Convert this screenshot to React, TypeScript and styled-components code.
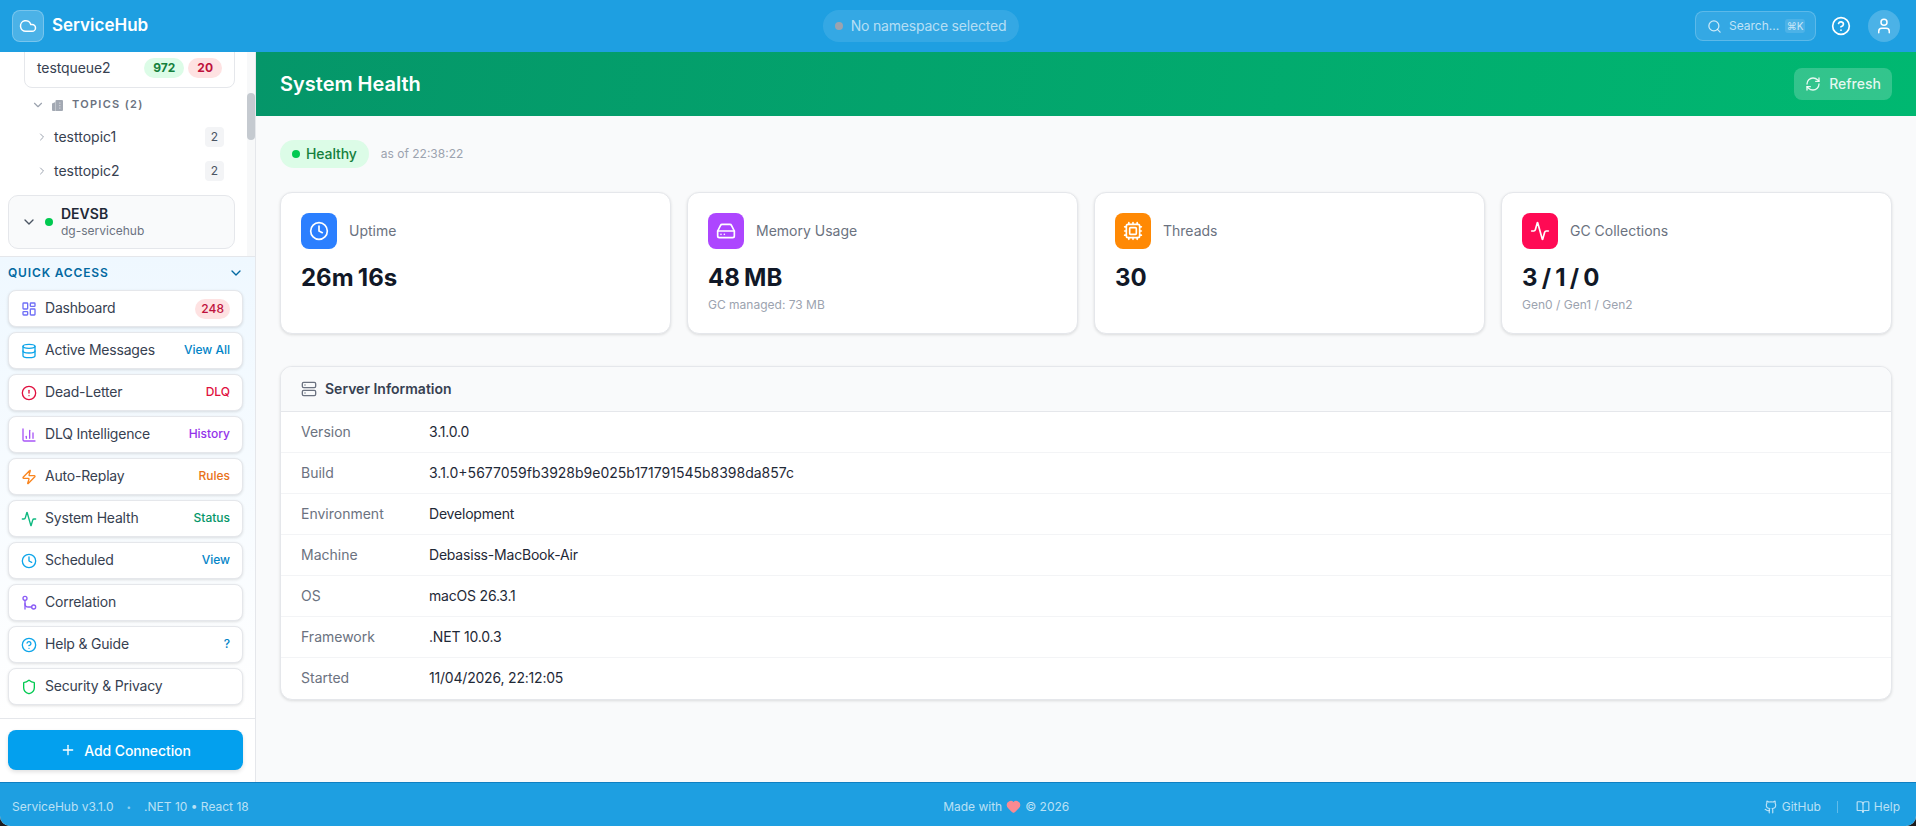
import styled, { createGlobalStyle, css } from 'styled-components';
import {
  Activity,
  BookOpen,
  ChartColumn,
  ChevronDown,
  ChevronRight,
  CircleAlert,
  CircleHelp,
  Clock,
  Cloud,
  Cpu,
  Database,
  Github,
  HardDrive,
  Heart,
  LayoutDashboard,
  Plus,
  RefreshCw,
  Search,
  Server,
  Shield,
  User,
  Zap,
} from 'lucide-react';

const GlobalStyle = createGlobalStyle`
  html, body {
    margin: 0;
    height: 100%;
    overflow: hidden;
    background: #1c1c1e;
  }
  * {
    box-sizing: border-box;
  }
  #root {
    height: 100%;
  }
`;

const raised = css`
  padding-bottom: 2px;
`;

const TopicsIcon = () => (
  <svg width="13" height="13" viewBox="0 0 13 13">
    <path
      d="M1 4.5 4.5 3V2a1 1 0 0 1 1-1H11a1 1 0 0 1 1 1v9a1 1 0 0 1-1 1H2a1 1 0 0 1-1-1z"
      fill="#a3a9b3"
    />
    <path d="M4.5 3v9" stroke="#d5d8dc" strokeWidth="0.6" />
    <path d="M8.2 3.5h1.2v1.2H8.2zM8.2 6h1.2v1.2H8.2zM8.2 8.5h1.2v1.2H8.2z" fill="#d5d8dc" />
  </svg>
);

const CorrelationIcon = () => (
  <svg width="16" height="16" viewBox="0 0 24 24" fill="none" stroke="#8b5cf6" strokeWidth="2" strokeLinecap="round">
    <circle cx="6" cy="5" r="3" />
    <circle cx="19" cy="18" r="3" />
    <path d="M6 8v5a5 5 0 0 0 5 5h5" />
    <path d="M6 13v8" />
  </svg>
);

const quickItems = [
  { label: 'Dashboard', icon: <LayoutDashboard size={16} color="#6f6ff6" />, badge: '248' },
  { label: 'Active Messages', icon: <Database size={16} color="#0ea5e9" />, tag: 'View All', tagColor: '#0284c7' },
  { label: 'Dead-Letter', icon: <CircleAlert size={16} color="#e0103f" />, tag: 'DLQ', tagColor: '#e0103f' },
  { label: 'DLQ Intelligence', icon: <ChartColumn size={16} color="#a855f7" />, tag: 'History', tagColor: '#9333ea' },
  { label: 'Auto-Replay', icon: <Zap size={16} color="#f9851f" />, tag: 'Rules', tagColor: '#e8711a' },
  { label: 'System Health', icon: <Activity size={16} color="#10b981" />, tag: 'Status', tagColor: '#059669' },
  { label: 'Scheduled', icon: <Clock size={16} color="#0ea5e9" />, tag: 'View', tagColor: '#0284c7' },
  { label: 'Correlation', icon: <CorrelationIcon /> },
  { label: 'Help & Guide', icon: <CircleHelp size={16} color="#0ea5e9" />, tag: '?', tagColor: '#0284c7' },
  { label: 'Security & Privacy', icon: <Shield size={16} color="#00c950" /> },
];

const stats = [
  { label: 'Uptime', value: '26m 16s', color: '#2b7fff', icon: <Clock size={20} color="#fff" /> },
  { label: 'Memory Usage', value: '48 MB', sub: 'GC managed: 73 MB', color: '#ad46ff', icon: <HardDrive size={20} color="#fff" /> },
  { label: 'Threads', value: '30', color: '#ff8904', icon: <Cpu size={20} color="#fff" /> },
  { label: 'GC Collections', value: '3 / 1 / 0', sub: 'Gen0 / Gen1 / Gen2', color: '#ff0a54', icon: <Activity size={20} color="#fff" /> },
];

const serverInfo = [
  ['Version', '3.1.0.0'],
  ['Build', '3.1.0+5677059fb3928b9e025b171791545b8398da857c'],
  ['Environment', 'Development'],
  ['Machine', 'Debasiss-MacBook-Air'],
  ['OS', 'macOS 26.3.1'],
  ['Framework', '.NET 10.0.3'],
  ['Started', '11/04/2026, 22:12:05'],
];

const App = () => {
  return (
    <Shell>
      <GlobalStyle />
      <Header>
        <Brand>
          <LogoTile>
            <Cloud size={18} color="#fff" />
          </LogoTile>
          <BrandName>ServiceHub</BrandName>
        </Brand>
        <NamespacePill>
          <GreyDot />
          <PillText>No namespace selected</PillText>
        </NamespacePill>
        <HeaderActions>
          <SearchBox>
            <Search size={15} color="rgba(255,255,255,0.75)" />
            <SearchText>Search...</SearchText>
            <Kbd>⌘K</Kbd>
          </SearchBox>
          <HelpButton>
            <CircleHelp size={20} color="#fff" />
          </HelpButton>
          <Avatar>
            <User size={18} color="#fff" />
          </Avatar>
        </HeaderActions>
      </Header>

      <Body>
        <Sidebar>
          <Tree>
            <QueueCard>
              <QueueName>testqueue2</QueueName>
              <CountBadge $bg="#dcfce7" $fg="#15803d">972</CountBadge>
              <CountBadge $bg="#fee2e2" $fg="#be123c">20</CountBadge>
            </QueueCard>
            <TopicsHeading>
              <ChevronDown size={14} color="#9ca3af" />
              <TopicsIcon />
              <TopicsLabel>TOPICS (2)</TopicsLabel>
            </TopicsHeading>
            <TopicRow>
              <ChevronRight size={12} color="#9ca3af" />
              <TopicName>testtopic1</TopicName>
              <SubCount>2</SubCount>
            </TopicRow>
            <TopicRow>
              <ChevronRight size={12} color="#9ca3af" />
              <TopicName>testtopic2</TopicName>
              <SubCount>2</SubCount>
            </TopicRow>
            <NamespaceCard>
              <ChevronDown size={16} color="#4b5563" />
              <GreenDot />
              <div>
                <NamespaceName>DEVSB</NamespaceName>
                <NamespaceHost>dg-servicehub</NamespaceHost>
              </div>
            </NamespaceCard>
            <ScrollTrack>
              <ScrollThumb />
            </ScrollTrack>
          </Tree>

          <QuickAccess>
            <QuickHeading>
              <span>QUICK ACCESS</span>
              <ChevronDown size={16} color="#0369a1" />
            </QuickHeading>
            <QuickList>
              {quickItems.map((item) => (
                <QuickItem key={item.label}>
                  <IconSlot>{item.icon}</IconSlot>
                  <QuickLabel>{item.label}</QuickLabel>
                  {item.badge && <AlertBadge>{item.badge}</AlertBadge>}
                  {item.tag && <QuickTag $color={item.tagColor}>{item.tag}</QuickTag>}
                </QuickItem>
              ))}
            </QuickList>
          </QuickAccess>

          <AddArea>
            <AddButton>
              <Plus size={16} color="#fff" />
              Add Connection
            </AddButton>
          </AddArea>
        </Sidebar>

        <Main>
          <Banner>
            <PageTitle>System Health</PageTitle>
            <RefreshButton>
              <RefreshCw size={16} />
              <ButtonText>Refresh</ButtonText>
            </RefreshButton>
          </Banner>
          <Content>
            <StatusRow>
              <HealthyPill>
                <HealthyDot />
                <HealthyText>Healthy</HealthyText>
              </HealthyPill>
              <AsOf>as of 22:38:22</AsOf>
            </StatusRow>
            <StatGrid>
              {stats.map((stat) => (
                <StatCard key={stat.label}>
                  <StatTop>
                    <StatIcon $color={stat.color}>{stat.icon}</StatIcon>
                    <StatLabel>{stat.label}</StatLabel>
                  </StatTop>
                  <StatValue>{stat.value}</StatValue>
                  {stat.sub && <StatSub>{stat.sub}</StatSub>}
                </StatCard>
              ))}
            </StatGrid>
            <InfoCard>
              <InfoHeader>
                <Server size={16} color="#6b7280" />
                <InfoTitle>Server Information</InfoTitle>
              </InfoHeader>
              {serverInfo.map(([label, value]) => (
                <InfoRow key={label}>
                  <InfoLabel>{label}</InfoLabel>
                  <InfoValue $tight={label !== 'Build'}>{value}</InfoValue>
                </InfoRow>
              ))}
            </InfoCard>
          </Content>
        </Main>
      </Body>

      <Footer>
        <FooterLeft>
          <span>ServiceHub v3.1.0</span>
          <FooterDot>•</FooterDot>
          <span>.NET 10 • React 18</span>
        </FooterLeft>
        <FooterCenter>
          Made with
          <Heart size={15} color="#fb8a92" fill="#fb8a92" />
          © 2026
        </FooterCenter>
        <FooterRight>
          <FooterLink>
            <Github size={14} />
            GitHub
          </FooterLink>
          <FooterSeparator />
          <FooterLink>
            <BookOpen size={14} />
            Help
          </FooterLink>
        </FooterRight>
      </Footer>
    </Shell>
  );
};

const Shell = styled.div`
  height: 826px;
  display: flex;
  flex-direction: column;
  overflow: hidden;
  border-radius: 0 0 10px 10px;
  font-family: Inter, 'Liberation Sans', sans-serif;
  background: #f9fafb;
`;

const Header = styled.header`
  height: 52px;
  flex: none;
  display: flex;
  align-items: center;
  justify-content: space-between;
  padding: 0 16px 0 12px;
  background: #1e9fe1;
`;

const Brand = styled.div`
  width: 134px;
  flex: none;
  display: flex;
  align-items: center;
  gap: 8px;
`;

const LogoTile = styled.div`
  width: 32px;
  height: 32px;
  flex: none;
  display: flex;
  align-items: center;
  justify-content: center;
  border-radius: 8px;
  background: rgba(255, 255, 255, 0.2);
  border: 1px solid rgba(255, 255, 255, 0.25);
`;

const BrandName = styled.span`
  ${raised}
  font-size: 17px;
  font-weight: 600;
  color: #fff;
`;

const NamespacePill = styled.div`
  width: 196px;
  height: 32px;
  display: flex;
  align-items: center;
  justify-content: center;
  gap: 8px;
  border-radius: 16px;
  background: rgba(255, 255, 255, 0.1);
`;

const PillText = styled.span`
  ${raised}
  font-size: 14px;
  letter-spacing: -0.2px;
  color: rgba(255, 255, 255, 0.65);
`;

const GreyDot = styled.span`
  width: 8px;
  height: 8px;
  border-radius: 50%;
  background: #9ca3af;
`;

const HeaderActions = styled.div`
  display: flex;
  align-items: center;
`;

const SearchBox = styled.div`
  width: 121px;
  height: 30px;
  display: flex;
  align-items: center;
  padding: 0 10px 0 11px;
  border-radius: 8px;
  border: 1px solid rgba(255, 255, 255, 0.2);
  background: rgba(255, 255, 255, 0.1);
`;

const SearchText = styled.span`
  ${raised}
  flex: 1;
  margin-left: 7px;
  font-size: 12px;
  color: rgba(255, 255, 255, 0.7);
`;

const Kbd = styled.span`
  width: 20px;
  height: 14px;
  display: flex;
  align-items: center;
  justify-content: center;
  border-radius: 3px;
  background: rgba(255, 255, 255, 0.12);
  font-size: 10px;
  color: rgba(255, 255, 255, 0.7);
`;

const HelpButton = styled.div`
  margin-left: 15px;
  display: flex;
`;

const Avatar = styled.div`
  width: 32px;
  height: 32px;
  margin-left: 17px;
  display: flex;
  align-items: center;
  justify-content: center;
  border-radius: 50%;
  background: rgba(255, 255, 255, 0.2);
`;

const Body = styled.div`
  flex: 1;
  min-height: 0;
  display: flex;
`;

const Sidebar = styled.aside`
  width: 256px;
  flex: none;
  display: flex;
  flex-direction: column;
  background: #fff;
  border-right: 1px solid #e5e7eb;
`;

const Tree = styled.div`
  position: relative;
  flex: 1;
  min-height: 0;
  overflow: hidden;
  display: flex;
  flex-direction: column;
  justify-content: flex-end;
  padding: 0 20px 7px 8px;
`;

const ScrollTrack = styled.div`
  position: absolute;
  top: 0;
  right: 0;
  bottom: 0;
  width: 8px;
  background: #f7f8f9;
`;

const ScrollThumb = styled.div`
  width: 8px;
  height: 47px;
  margin-top: 41px;
  border-radius: 4px;
  background: #c5cad0;
`;

const QueueCard = styled.div`
  flex: none;
  height: 40px;
  margin-left: 16px;
  display: flex;
  align-items: center;
  gap: 4px;
  padding: 0 12px;
  border: 1px solid #e5e7eb;
  border-radius: 0 0 8px 8px;
`;

const QueueName = styled.span`
  ${raised}
  flex: 1;
  font-size: 14px;
  letter-spacing: -0.1px;
  color: #374151;
`;

const CountBadge = styled.span<{ $bg: string; $fg: string }>`
  height: 20px;
  min-width: 32px;
  padding: 0 9px 1px;
  display: flex;
  align-items: center;
  justify-content: center;
  border-radius: 10px;
  background: ${(p) => p.$bg};
  color: ${(p) => p.$fg};
  font-size: 12px;
  font-weight: 700;
`;

const TopicsHeading = styled.div`
  flex: none;
  height: 30px;
  margin-top: 2px;
  padding-left: 23px;
  display: flex;
  align-items: center;
  gap: 6px;
`;

const TopicsLabel = styled.span`
  ${raised}
  margin-left: 2px;
  font-size: 11px;
  font-weight: 600;
  letter-spacing: 1.3px;
  color: #6b7280;
`;

const TopicRow = styled.div`
  flex: none;
  height: 34px;
  padding: 0 11px 0 28px;
  display: flex;
  align-items: center;
  gap: 6px;
`;

const TopicName = styled.span`
  ${raised}
  flex: 1;
  font-size: 14px;
  color: #374151;
`;

const SubCount = styled.span`
  width: 19px;
  height: 20px;
  padding-bottom: 1px;
  display: flex;
  align-items: center;
  justify-content: center;
  border-radius: 4px;
  background: #f3f4f6;
  font-size: 12px;
  color: #4b5563;
`;

const NamespaceCard = styled.div`
  flex: none;
  height: 54px;
  margin-top: 7px;
  padding: 0 12px;
  display: flex;
  align-items: center;
  gap: 8px;
  border: 1px solid #e5e7eb;
  border-radius: 10px;
  background: #f9fafb;
`;

const GreenDot = styled.span`
  width: 8px;
  height: 8px;
  border-radius: 50%;
  background: #00c950;
`;

const NamespaceName = styled.div`
  font-size: 14px;
  line-height: 18px;
  font-weight: 600;
  color: #1f2937;
`;

const NamespaceHost = styled.div`
  font-size: 12px;
  line-height: 16px;
  color: #6b7280;
`;

const QuickAccess = styled.section`
  flex: none;
  padding: 8px 12px 13px 8px;
  border-top: 1px solid #e5e7eb;
  border-bottom: 1px solid #e5e7eb;
  background: linear-gradient(180deg, #eff8ff 0%, #ffffff 100%);
`;

const QuickHeading = styled.div`
  height: 16px;
  margin: 0 -1px 9px 0;
  display: flex;
  align-items: center;
  justify-content: space-between;
  font-size: 12px;
  font-weight: 600;
  letter-spacing: 0.07em;
  color: #0369a1;
  span {
    ${raised}
  }
`;

const QuickList = styled.div`
  display: flex;
  flex-direction: column;
  gap: 5px;
`;

const QuickItem = styled.div`
  height: 37px;
  padding: 0 12px;
  display: flex;
  align-items: center;
  gap: 8px;
  background: #fff;
  border: 1px solid #e5e7eb;
  border-radius: 8px;
  box-shadow: 0 1px 3px rgba(0, 0, 0, 0.12);
`;

const IconSlot = styled.span`
  display: flex;
`;

const QuickLabel = styled.span`
  ${raised}
  flex: 1;
  font-size: 14px;
  letter-spacing: -0.2px;
  color: #374151;
`;

const QuickTag = styled.span<{ $color?: string }>`
  ${raised}
  font-size: 12px;
  font-weight: 500;
  color: ${(p) => p.$color};
`;

const AlertBadge = styled.span`
  height: 20px;
  padding: 0 6px 1px;
  display: flex;
  align-items: center;
  border-radius: 10px;
  background: #fee2e2;
  font-size: 12px;
  font-weight: 500;
  color: #be123c;
`;

const AddArea = styled.div`
  flex: none;
  padding: 11px 12px 12px 8px;
`;

const AddButton = styled.button`
  width: 100%;
  height: 40px;
  display: flex;
  align-items: center;
  justify-content: center;
  gap: 8px;
  border: none;
  border-radius: 8px;
  background: #03a0ee;
  box-shadow: 0 2px 4px rgba(0, 0, 0, 0.12);
  font-family: inherit;
  font-size: 14px;
  font-weight: 500;
  letter-spacing: -0.1px;
  color: #fff;
`;

const Main = styled.main`
  flex: 1;
  min-width: 0;
  display: flex;
  flex-direction: column;
`;

const Banner = styled.div`
  height: 64px;
  flex: none;
  display: flex;
  align-items: center;
  justify-content: space-between;
  padding: 0 24px;
  background: linear-gradient(100deg, #059669 0%, #00b871 100%);
`;

const PageTitle = styled.h1`
  margin: 0;
  font-size: 20px;
  font-weight: 600;
  color: #fff;
`;

const RefreshButton = styled.button`
  width: 98px;
  height: 32px;
  display: flex;
  align-items: center;
  justify-content: center;
  gap: 8px;
  border: none;
  border-radius: 8px;
  background: rgba(255, 255, 255, 0.2);
  font-family: inherit;
  font-size: 14px;
  font-weight: 500;
  color: rgba(255, 255, 255, 0.88);
`;

const ButtonText = styled.span`
  padding-bottom: 1px;
`;

const Content = styled.div`
  flex: 1;
  padding: 24px;
  background: #f9fafb;
`;

const StatusRow = styled.div`
  display: flex;
  align-items: center;
  gap: 12px;
  margin-bottom: 24px;
`;

const HealthyPill = styled.span`
  height: 28px;
  padding: 0 12px;
  display: flex;
  align-items: center;
  gap: 6px;
  border-radius: 14px;
  background: #dcfce7;
`;

const HealthyText = styled.span`
  ${raised}
  font-size: 14px;
  font-weight: 500;
  letter-spacing: -0.1px;
  color: #15803d;
`;

const HealthyDot = styled.span`
  width: 8px;
  height: 8px;
  border-radius: 50%;
  background: #00c950;
`;

const AsOf = styled.span`
  ${raised}
  font-size: 12px;
  color: #9ca3af;
`;

const StatGrid = styled.div`
  display: grid;
  grid-template-columns: repeat(4, 1fr);
  gap: 16px;
  margin-bottom: 32px;
`;

const StatCard = styled.div`
  height: 142px;
  padding: 20px;
  background: #fff;
  border: 1px solid #e5e7eb;
  border-radius: 12px;
  box-shadow: 0 1px 3px rgba(0, 0, 0, 0.12);
`;

const StatTop = styled.div`
  display: flex;
  align-items: center;
  gap: 12px;
`;

const StatIcon = styled.div<{ $color: string }>`
  width: 36px;
  height: 36px;
  display: flex;
  align-items: center;
  justify-content: center;
  border-radius: 8px;
  background: ${(p) => p.$color};
`;

const StatLabel = styled.span`
  ${raised}
  font-size: 14px;
  color: #6b7280;
`;

const StatValue = styled.div`
  margin-top: 13px;
  font-size: 24px;
  line-height: 32px;
  font-weight: 700;
  word-spacing: -1.5px;
  color: #111827;
`;

const StatSub = styled.div`
  margin-top: 3px;
  font-size: 12px;
  line-height: 16px;
  color: #9ca3af;
`;

const InfoCard = styled.section`
  overflow: hidden;
  background: #fff;
  border: 1px solid #e5e7eb;
  border-radius: 12px;
  box-shadow: 0 1px 3px rgba(0, 0, 0, 0.12);
`;

const InfoHeader = styled.div`
  height: 45px;
  padding: 0 20px;
  display: flex;
  align-items: center;
  gap: 8px;
  background: #f9fafb;
  border-bottom: 1px solid #e5e7eb;
`;

const InfoTitle = styled.span`
  ${raised}
  font-size: 14px;
  font-weight: 600;
  color: #374151;
`;

const InfoRow = styled.div`
  height: 41px;
  padding: 0 20px;
  display: flex;
  align-items: center;
  border-bottom: 1px solid #f3f4f6;
  font-size: 14px;
  &:last-child {
    border-bottom: none;
  }
`;

const InfoLabel = styled.span`
  ${raised}
  width: 128px;
  color: #6b7280;
`;

const InfoValue = styled.span<{ $tight: boolean }>`
  ${raised}
  letter-spacing: ${(p) => (p.$tight ? '-0.2px' : '0')};
  color: #1f2937;
`;

const Footer = styled.footer`
  height: 44px;
  flex: none;
  display: flex;
  align-items: center;
  justify-content: space-between;
  padding: 4px 16px 0 12px;
  background: #1e9fe1;
  border-top: 1px solid #0f7fc2;
  font-size: 12px;
  color: rgba(255, 255, 255, 0.7);
`;

const FooterLeft = styled.div`
  display: flex;
  align-items: center;
`;

const FooterDot = styled.span`
  margin: 0 13px;
  font-size: 8px;
  opacity: 0.7;
`;

const FooterCenter = styled.div`
  display: flex;
  align-items: center;
  gap: 4px;
`;

const FooterRight = styled.div`
  display: flex;
  align-items: center;
  gap: 16px;
`;

const FooterLink = styled.span`
  display: flex;
  align-items: center;
  gap: 4px;
`;

const FooterSeparator = styled.span`
  width: 1px;
  height: 12px;
  margin-right: 2px;
  background: rgba(255, 255, 255, 0.3);
`;

export default App;
